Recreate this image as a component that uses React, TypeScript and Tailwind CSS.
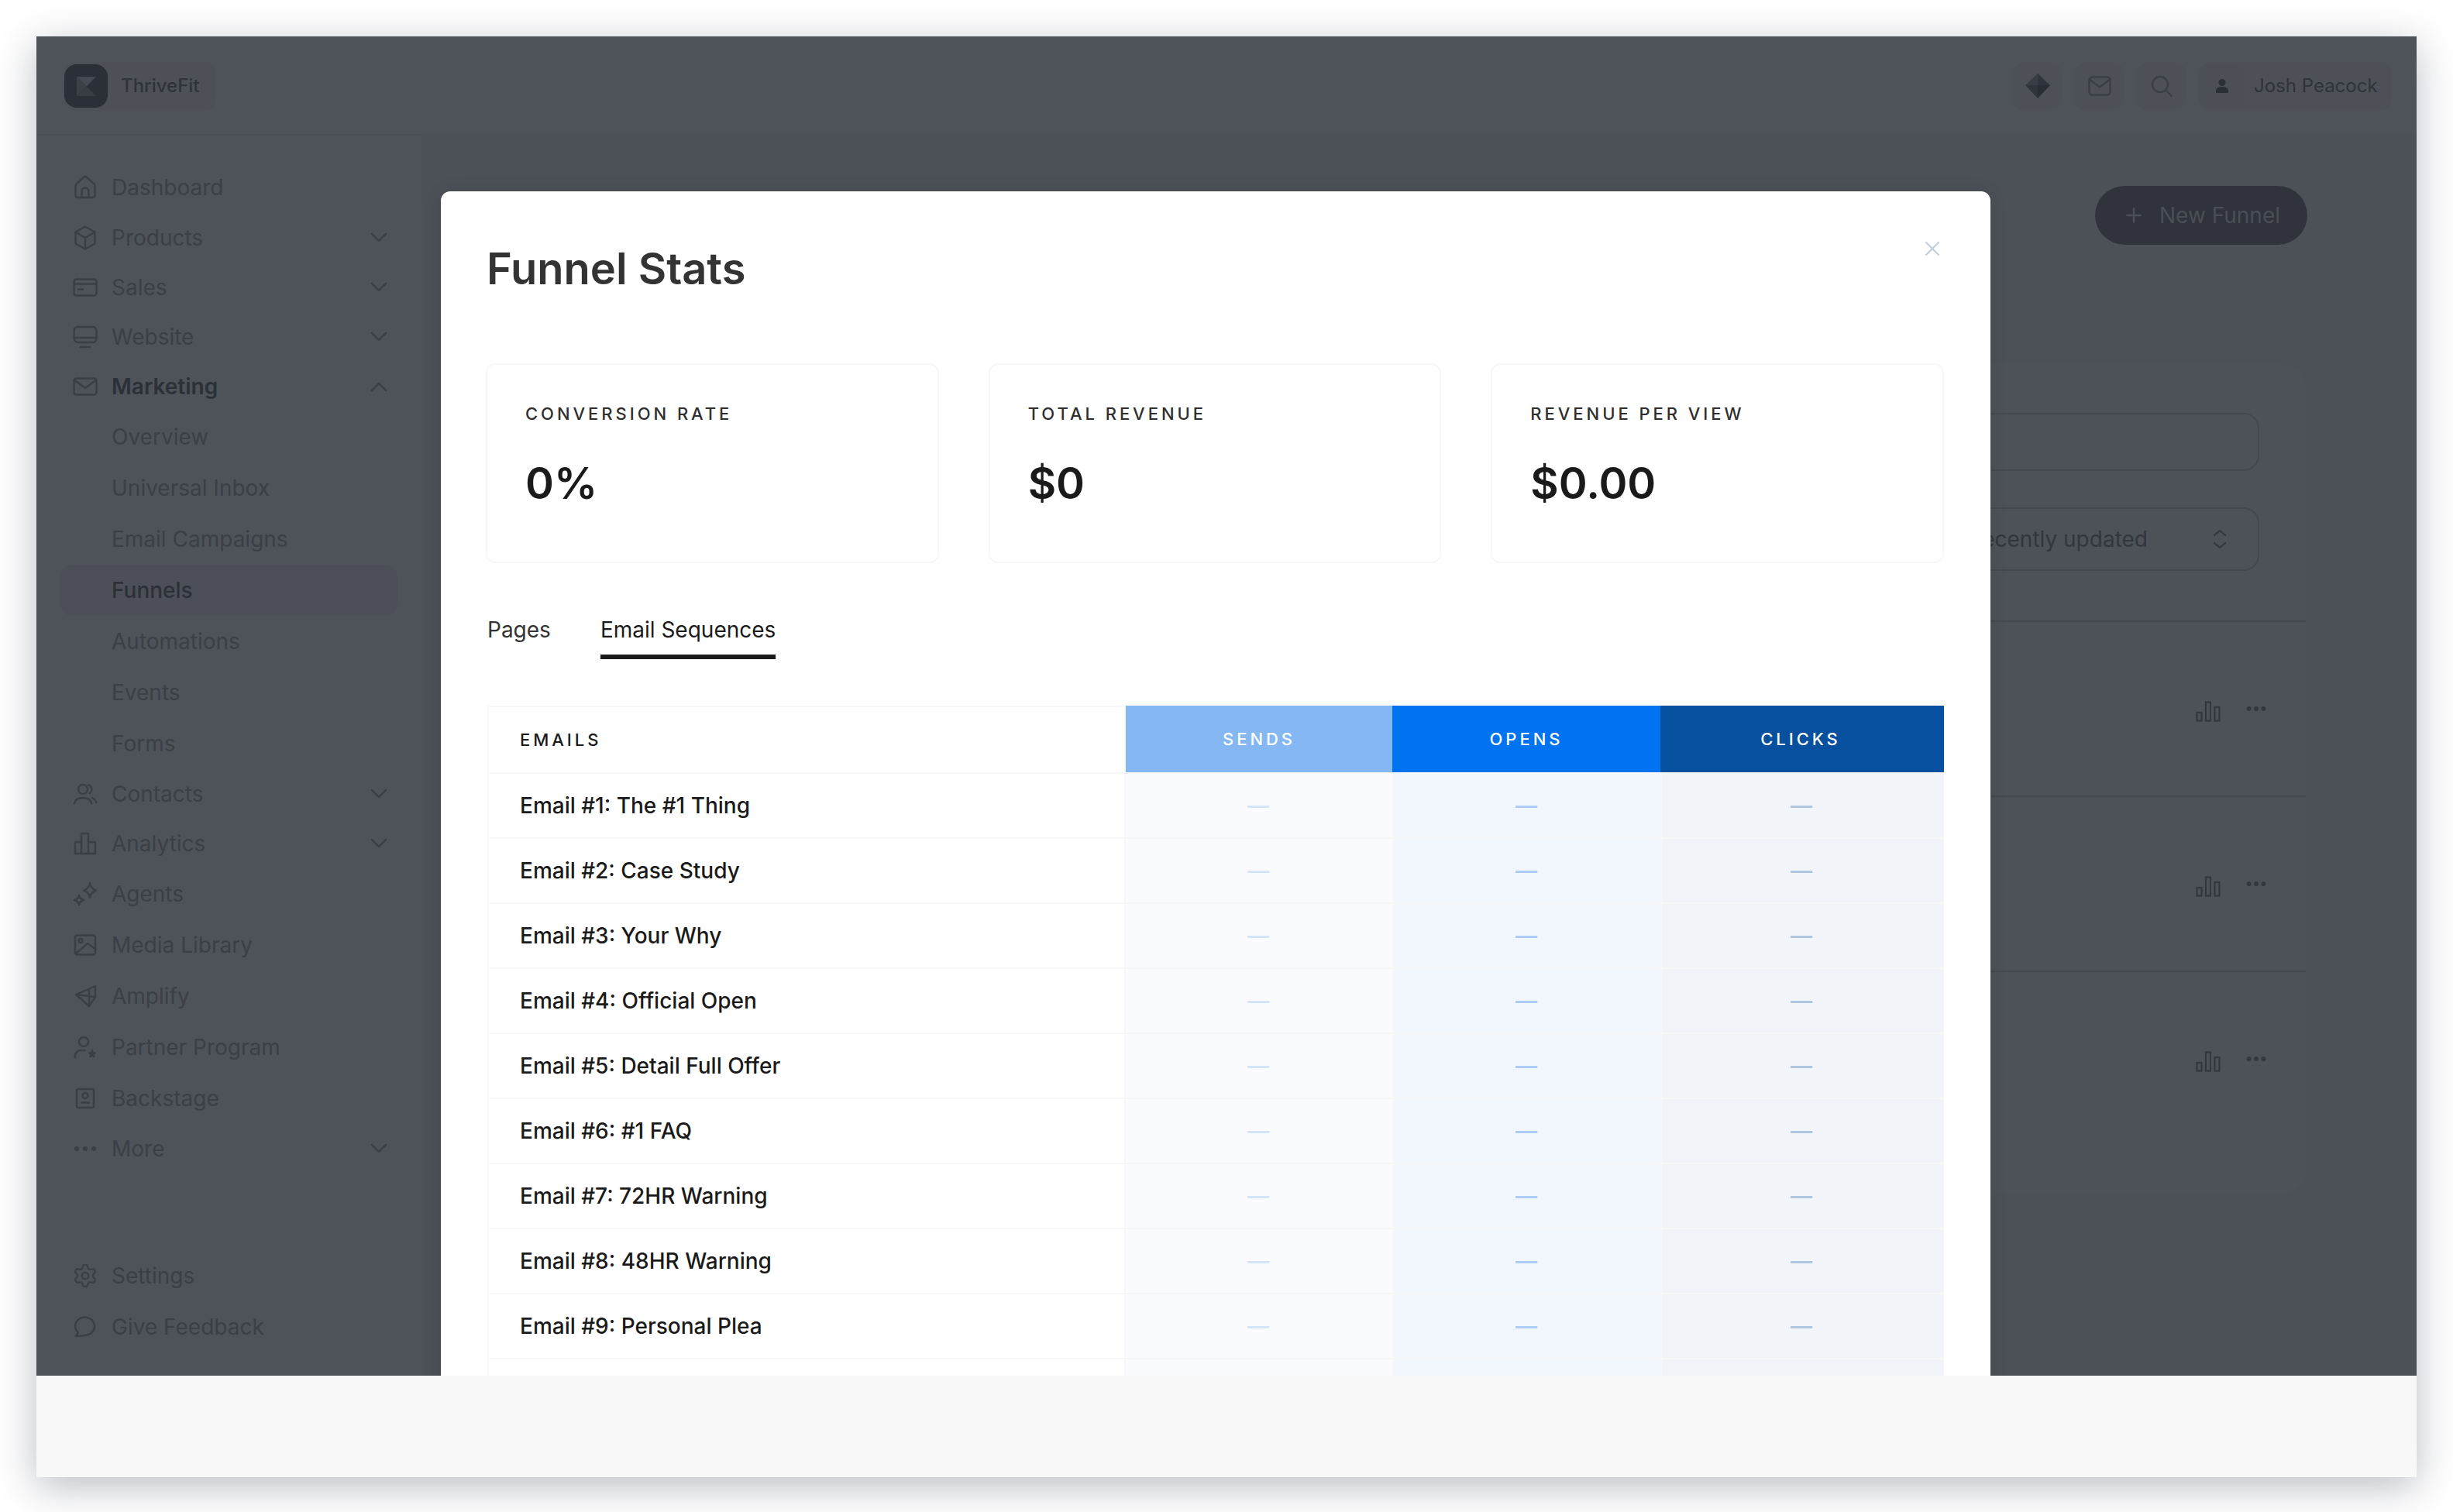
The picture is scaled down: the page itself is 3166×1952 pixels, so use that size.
import { Ellipsis, Plus, Settings, X } from 'lucide-react'

const font = "font-['Inter',sans-serif]"
const navStroke = '#3a3e45'

function Icon({ children, size = 32 }: { children: React.ReactNode; size?: number }) {
    return (
        <svg width={size} height={size} viewBox="0 0 32 32" fill="none" stroke={navStroke} strokeWidth="2.4" strokeLinecap="round" strokeLinejoin="round" className="shrink-0">
            {children}
        </svg>
    )
}

const icons: Record<string, React.ReactNode> = {
    Dashboard: <><path d="M3.500 13.500a3 3 0 0 1 1-2.200L14 3a3 3 0 0 1 4 0l9.500 8.300a3 3 0 0 1 1 2.200V26a3 3 0 0 1-3 3h-19a3 3 0 0 1-3-3z" /><path d="M11.500 29v-8a4.500 4.500 0 0 1 9 0v8" /></>,
    Products: <><path d="M16 1.500 28.500 8.500v15L16 30.500 3.500 23.500v-15z" /><path d="M3.500 8.500 16 16l12.500-7.500M16 16v14.500" /></>,
    Sales: <><rect x="1.500" y="5.500" width="29" height="21" rx="3" /><path d="M1.500 11.500h29M7 18.500h6" /></>,
    Website: <><rect x="1.500" y="3" width="29" height="20" rx="5" /><path d="M1.500 17h29M10 29h12" /></>,
    Marketing: <><rect x="1.500" y="5.500" width="29" height="21" rx="3" /><path d="m2.500 8 13.500 10L29.500 8" /></>,
    Contacts: <><circle cx="13" cy="10" r="6" /><path d="M2 28c1-5 5.500-7 11-7s10 2 11 7M20 4.500a6 6 0 0 1 2 10.500M25 21c2.500 1 4.500 3.500 5 6" /></>,
    Analytics: <path d="M3 29V15a1 1 0 0 1 1-1h7V4a1 1 0 0 1 1-1h7a1 1 0 0 1 1 1v10h8a1 1 0 0 1 1 1v14zM11 14v15M20 14v15" />,
    Agents: <><path d="M22 2c1 5 3 8 8 9.500-5 1.500-7 4-8 9.500-1-5.500-3-8-8-9.500 5-1.500 7-4.500 8-9.500z" /><path d="M8 18c.500 3 2 5 6 6-4 1-5.500 3-6 6-.500-3-2-5-6-6 4-1 5.500-3 6-6z" /></>,
    'Media Library': <><rect x="3" y="3.500" width="26" height="25" rx="3" /><circle cx="10" cy="10.500" r="2.500" /><path d="m4 27 15-13 10 7" /></>,
    Amplify: <path d="M4 14 29 3v14l-8 12zM4 14l25 3M21 8v21" />,
    'Partner Program': <><circle cx="14" cy="9" r="6" /><path d="M3 29v-2a7 7 0 0 1 7-7h6" /><path d="m25 19 1.500 3.500 3.500.500-2.500 2.500.500 3.500-3-1.700-3 1.700.500-3.500-2.500-2.500 3.500-.500z" fill={navStroke} strokeWidth="1" /></>,
    Backstage: <><rect x="5" y="4" width="22" height="24" rx="2" /><circle cx="16" cy="12.500" r="3.500" /><path d="M11 21.500h10" /></>,
    More: <><circle cx="5" cy="16" r="1.800" fill={navStroke} /><circle cx="16" cy="16" r="1.800" fill={navStroke} /><circle cx="27" cy="16" r="1.800" fill={navStroke} /></>,
    Settings: <Settings x={-1} y={-1} size={34} strokeWidth={1.700} />,
    'Give Feedback': <path d="M3.500 28c1.500-1 3-2.500 3-5A12.500 11.500 0 1 1 17 26.500c-4 1.500-9 1.500-13.500 1.500z" />,
}

function Chevron({ up = false }: { up?: boolean }) {
    return (
        <svg width="22" height="14" viewBox="0 0 22 14" fill="none" stroke={navStroke} strokeWidth="2.400" strokeLinecap="round" strokeLinejoin="round" className="shrink-0">
            <path d={up ? 'M2 12l9-9 9 9' : 'M2 2l9 9 9-9'} />
        </svg>
    )
}

function NavItem({ label, chevron, up, bold }: { label: string; chevron?: boolean; up?: boolean; bold?: boolean }) {
    return (
        <div className={`flex items-center gap-[18px] pl-4 pr-[13px] text-[28px] ${chevron ? 'h-16' : 'h-[66px]'} ${bold ? 'font-semibold text-[#2c3038]' : 'text-[#3b3f46]'}`}>
            <Icon>{icons[label]}</Icon>
            <span className="flex-1">{label}</span>
            {chevron && <Chevron up={up} />}
        </div>
    )
}

function SubItem({ label, active }: { label: string; active?: boolean }) {
    return (
        <div className={`flex h-[66px] items-center rounded-2xl pl-[66px] text-[28px] ${active ? 'bg-[#4c4f57] font-medium text-[#2c3038]' : 'text-[#3b3f46]'}`}>
            {label}
        </div>
    )
}

function Sidebar() {
    return (
        <aside className="flex w-[499px] shrink-0 flex-col border-r-2 border-[#4c5057] px-[31px] pt-[34px]">
            <NavItem label="Dashboard" />
            <NavItem label="Products" chevron />
            <NavItem label="Sales" chevron />
            <NavItem label="Website" chevron />
            <NavItem label="Marketing" chevron up bold />
            <SubItem label="Overview" />
            <SubItem label="Universal Inbox" />
            <SubItem label="Email Campaigns" />
            <SubItem label="Funnels" active />
            <SubItem label="Automations" />
            <SubItem label="Events" />
            <SubItem label="Forms" />
            <NavItem label="Contacts" chevron />
            <NavItem label="Analytics" chevron />
            <NavItem label="Agents" />
            <NavItem label="Media Library" />
            <NavItem label="Amplify" />
            <NavItem label="Partner Program" />
            <NavItem label="Backstage" />
            <NavItem label="More" chevron />
            <div className="mt-[99px]">
                <NavItem label="Settings" />
                <NavItem label="Give Feedback" />
            </div>
        </aside>
    )
}

function TopBar() {
    return (
        <header className="flex h-[128px] items-center justify-between border-b-2 border-[#4c5057] pl-9 pr-8 pt-[2px]">
            <div className="flex h-[63px] w-[196px] items-center gap-[17px] rounded-2xl bg-[#4d5057]">
                <div className="flex h-14 w-14 items-center justify-center rounded-2xl bg-[#2b2f37]">
                    <svg width="25" height="25" viewBox="0 0 26 26">
                        <path d="M0 0l13 13L0 26z" fill="#3d4047" />
                        <path d="M0 0h26L13 13z" fill="#454951" />
                        <path d="M13 13 26 26H0z" fill="#393c43" />
                    </svg>
                </div>
                <span className="text-[24px] font-medium text-[#2f333a]">ThriveFit</span>
            </div>
            <div className="flex items-center gap-[17px]">
                <div className="flex h-[63px] w-[63px] items-center justify-center rounded-2xl bg-[#4d5057]">
                    <svg width="32" height="32" viewBox="0 0 32 32">
                        <path d="M16 0 0 15h16z" fill="#383c44" />
                        <path d="M16 0l16 15H16z" fill="#30343c" />
                        <path d="M0 15l16 17V15z" fill="#2f333b" />
                        <path d="M32 15 16 32V15z" fill="#282c33" />
                    </svg>
                </div>
                <div className="flex h-[63px] w-[63px] items-center justify-center rounded-2xl bg-[#4d5057]">
                    <svg width="30" height="26" viewBox="0 0 30 26" fill="none" stroke={navStroke} strokeWidth="2.400" strokeLinecap="round" strokeLinejoin="round">
                        <rect x="1.500" y="1.500" width="27" height="23" rx="4" />
                        <path d="m2.500 5 12.500 9.500L27.500 5" />
                    </svg>
                </div>
                <div className="flex h-[63px] w-[63px] items-center justify-center rounded-2xl bg-[#4d5057]">
                    <svg width="28" height="28" viewBox="0 0 28 28" fill="none" stroke={navStroke} strokeWidth="2.400" strokeLinecap="round">
                        <circle cx="12" cy="12" r="10" />
                        <path d="m20 20 6.500 7" />
                    </svg>
                </div>
                <div className="flex h-[63px] w-[249px] items-center gap-3 rounded-2xl bg-[#4d5057]">
                    <div className="flex h-[56px] w-[59px] items-center justify-center rounded-2xl bg-[#4c4f56]">
                        <svg width="16" height="18" viewBox="0 0 16 18" fill="#2b2f37">
                            <circle cx="8" cy="4.500" r="4.500" />
                            <path d="M0 18v-3c0-3 3-5 8-5s8 2 8 5v3z" />
                        </svg>
                    </div>
                    <span className="text-[24px] font-normal text-[#2f333a]">Josh Peacock</span>
                </div>
            </div>
        </header>
    )
}

function BarIcon() {
    return (
        <svg width="32" height="27" viewBox="0 0 32 27" fill="none" stroke="#33373e" strokeWidth="2.200">
            <rect x="1.500" y="15" width="6" height="10.500" />
            <rect x="13" y="1.500" width="6" height="24" />
            <rect x="24.500" y="8" width="6" height="17.500" />
        </svg>
    )
}

function FunnelRow() {
    return (
        <div className="flex h-[226px] items-center justify-end border-t-2 border-[#44484f] pr-[48px] pt-[6px]">
            <BarIcon />
            <Ellipsis size={32} color="#33373e" strokeWidth={2.500} className="mb-[6px] ml-[30px]" />
        </div>
    )
}

function Main() {
    return (
        <main className="relative flex flex-1 flex-col bg-[#4c5057] px-[141px] pt-[65px]">
            <div className="flex justify-end">
                <button className="flex h-[76px] w-[274px] items-center justify-center gap-[18px] rounded-full bg-[#30333b] text-[28px] font-normal text-[#4a4e56]">
                    <Plus size={30} strokeWidth={2} />
                    New Funnel
                </button>
            </div>
            <div className="mt-[152px] flex h-[1075px] flex-col rounded-[32px] border-2 border-[#4c5058] bg-[#4d5158]">
                <div className="flex h-[331px] flex-col items-end gap-[47px] pr-[60px] pt-[63px]">
                    <div className="h-[75px] w-[1200px] rounded-[20px] border-2 border-[#44484f]" />
                    <div className="flex h-[82px] w-[600px] items-center justify-between rounded-[20px] border-2 border-[#44484f] px-10 text-[28px] text-[#33363d]">
                        <span className="ml-auto mr-[84px]">Recently updated</span>
                        <svg width="18" height="26" viewBox="0 0 18 26" fill="none" stroke="#33363d" strokeWidth="2.200" strokeLinecap="round" strokeLinejoin="round" className="shrink-0">
                            <path d="m2 8 7-6 7 6M2 18l7 6 7-6" />
                        </svg>
                    </div>
                </div>
                <FunnelRow />
                <FunnelRow />
                <FunnelRow />
            </div>
        </main>
    )
}

function StatCard({ label, value }: { label: string; value: string }) {
    return (
        <div className="h-[258px] rounded-xl border-2 border-[#f7f7f7] pl-[49px] pr-12 pt-[48px]">
            <div className="text-[22px] font-medium uppercase leading-[30px] tracking-[0.18em] text-[#2e2e2e]">{label}</div>
            <div className="mt-[39px] text-[56px] font-semibold leading-[72px] text-[#1a1a1a]">{value}</div>
        </div>
    )
}

const emails = [
    'Email #1: The #1 Thing',
    'Email #2: Case Study',
    'Email #3: Your Why',
    'Email #4: Official Open',
    'Email #5: Detail Full Offer',
    'Email #6: #1 FAQ',
    'Email #7: 72HR Warning',
    'Email #8: 48HR Warning',
    'Email #9: Personal Plea',
]

function EmailTable() {
    return (
        <div className="grid grid-cols-[824px_344px_346px_366px]">
            <div className="flex h-[86px] items-center border-x-2 border-t-2 border-[#f7f7f7] pl-10 text-[22px] font-medium tracking-[0.18em] text-[#1a1a1a]">EMAILS</div>
            <div className="flex h-[86px] items-center justify-center bg-[#85b8f2] text-[22px] font-medium tracking-[0.18em] text-white">SENDS</div>
            <div className="flex h-[86px] items-center justify-center bg-[#0073f0] text-[22px] font-medium tracking-[0.18em] text-white">OPENS</div>
            <div className="flex h-[86px] items-center justify-center bg-[#07509f] pr-1 text-[22px] font-medium tracking-[0.18em] text-white">CLICKS</div>
            {emails.map(email => (
                <div key={email} className="contents">
                    <div className="flex h-[84px] items-center border-x-2 border-t-2 border-[#f7f7f7] pl-10 text-[28px] font-[550] text-[#1a1a1a]">{email}</div>
                    <div className="flex h-[84px] items-center justify-center border-t-2 border-[#f7f7f7] bg-[#f9fbfe] pr-[2px] text-[28px] font-semibold text-[#d5e5f9]">—</div>
                    <div className="flex h-[84px] items-center justify-center border-l-2 border-t-2 border-[#f7f7f7] bg-[#f2f7fe] pr-[2px] text-[28px] font-semibold text-[#abcdf8]">—</div>
                    <div className="flex h-[84px] items-center justify-center border-l-2 border-t-2 border-[#f7f7f7] bg-[#f1f5fa] pr-1 text-[28px] font-semibold text-[#afc4e0]">—</div>
                </div>
            ))}
            <div className="h-[84px] border-x-2 border-t-2 border-[#f7f7f7]" />
            <div className="h-[84px] border-t-2 border-[#f7f7f7] bg-[#f9fbfe]" />
            <div className="h-[84px] border-l-2 border-t-2 border-[#f7f7f7] bg-[#f2f7fe]" />
            <div className="h-[84px] border-l-2 border-t-2 border-[#f7f7f7] bg-[#f1f5fa]" />
        </div>
    )
}

function StatsModal() {
    return (
        <div className="absolute left-[522px] top-[200px] w-[2000px] rounded-xl bg-white px-[60px] pt-[66px] shadow-[0_0_24px_rgba(0,0,0,0.08)]">
            <X size={32} color="#c5d0db" strokeWidth={1.800} className="absolute right-[59px] top-[58px]" />
            <h2 className="-ml-[1px] text-[56px] font-semibold leading-[68px] text-[#333333]">Funnel Stats</h2>
            <div className="-ml-[2px] mt-[88px] grid grid-cols-3 gap-16">
                <StatCard label="Conversion Rate" value="0%" />
                <StatCard label="Total Revenue" value="$0" />
                <StatCard label="Revenue Per View" value="$0.00" />
            </div>
            <div className="mt-[68px] flex gap-16 text-[28px] leading-[36px] text-[#333333]">
                <div>Pages</div>
                <div className="border-b-[6px] border-[#1a1a1a] pb-[14px] text-[#1a1a1a]">Email Sequences</div>
            </div>
            <div className="mt-[60px]">
                <EmailTable />
            </div>
        </div>
    )
}

export default function App() {
    return (
        <div className={`min-h-screen bg-white p-[47px] ${font}`}>
            <div className="flex h-[1860px] w-[3072px] flex-col shadow-[0_12px_48px_rgba(30,35,60,0.3)]">
                <div className="relative flex h-[1729px] flex-col overflow-hidden bg-[#4e5259]">
                    <TopBar />
                    <div className="flex flex-1">
                        <Sidebar />
                        <Main />
                    </div>
                    <StatsModal />
                </div>
                <div className="h-[131px] bg-[#f8f8f8]" />
            </div>
        </div>
    )
}
